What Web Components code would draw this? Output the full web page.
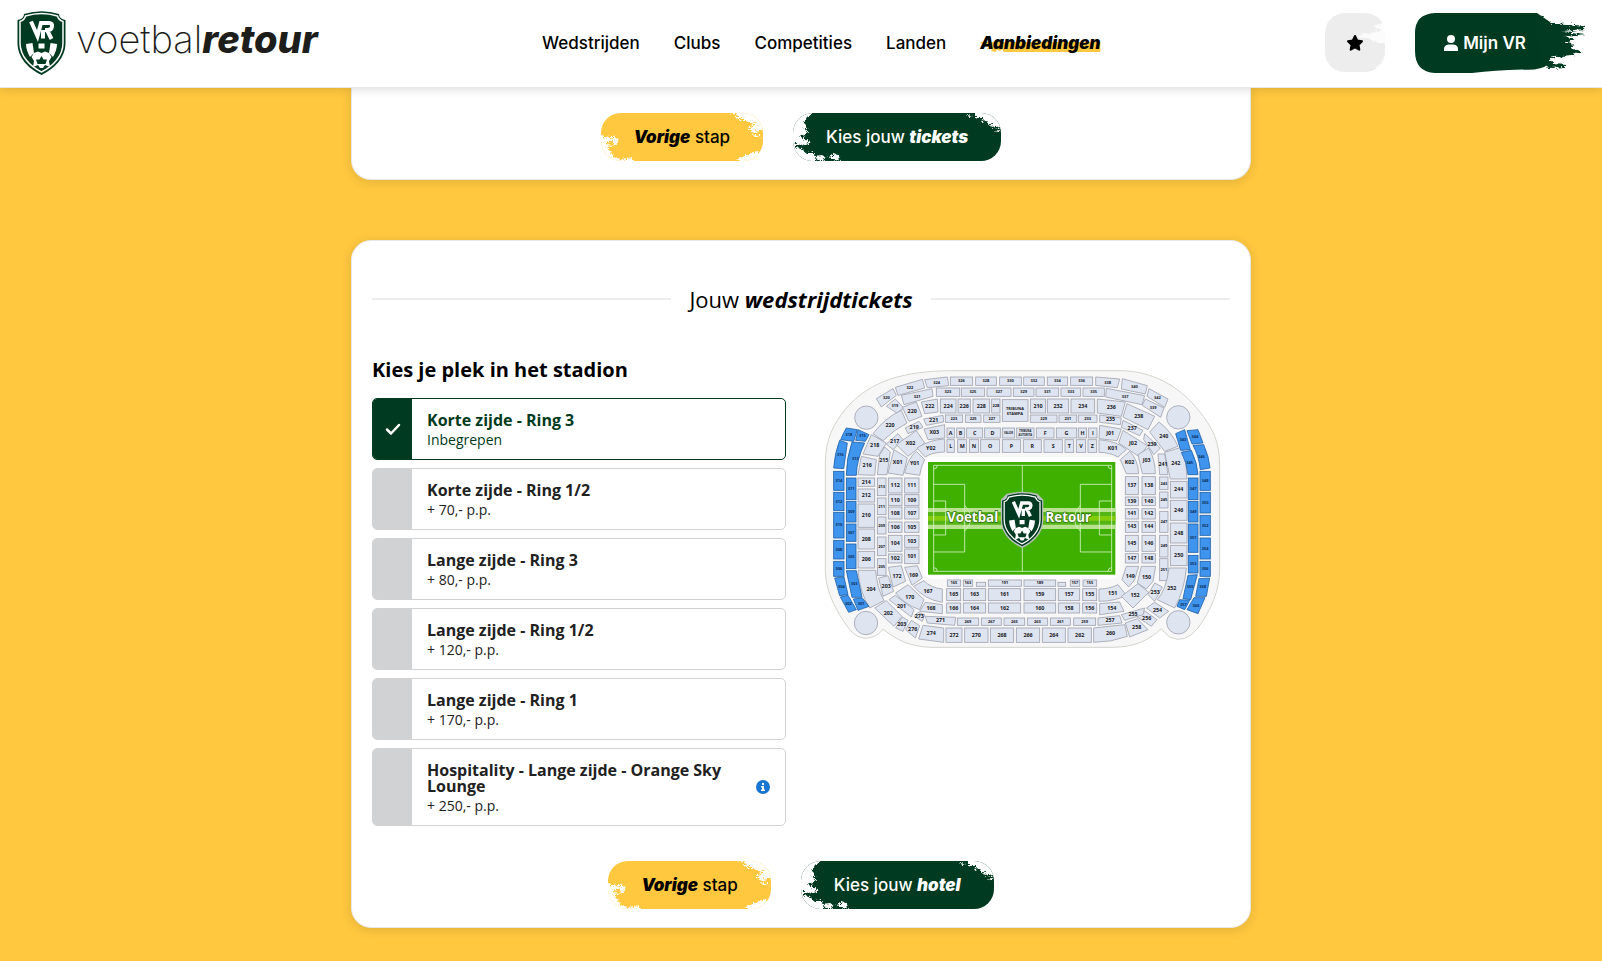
<!DOCTYPE html>
<html lang="nl">
<head>
<meta charset="utf-8">
<meta name="viewport" content="width=device-width, initial-scale=1">
<title>Voetbalretour</title>
<style>
	:root {
		--green: #003a20;
		--yellow: #ffc83f;
		--brand: Inter, "Open Sans", sans-serif;
	}
	body {
		margin: 0;
		min-height: 100vh;
		background: var(--yellow);
		color: #000;
		font: 14px/24px "Open Sans", "Noto Sans", sans-serif;
	}
	main {
		display: flex;
		flex-direction: column;
		gap: 60px;
		max-width: 900px;
		margin: 0 auto;
		padding-bottom: 33px;
	}
</style>
</head>
<body>
	<site-header></site-header>
	<main>
		<step-card open-top>
			<step-actions slot="actions">
				<brush-button tone="yellow"><b>Vorige</b> stap</brush-button>
				<brush-button tone="green">Kies jouw <b>tickets</b></brush-button>
			</step-actions>
		</step-card>
		<step-card>
			<section-title slot="title">Jouw <b>wedstrijdtickets</b></section-title>
			<seat-picker></seat-picker>
			<stadium-map></stadium-map>
			<step-actions slot="actions">
				<brush-button tone="yellow"><b>Vorige</b> stap</brush-button>
				<brush-button tone="green">Kies jouw <b>hotel</b></brush-button>
			</step-actions>
		</step-card>
	</main>

<script>
'use strict';

// club badge, drawn in a 49 x 64 box
const shield = `
	<path fill="#003a20" d="M7 3Q24.500-2.500 42 3Q42 8 48.500 9V32C48.500 47 37 58 24.500 64C12 58 .5 47 .5 32V9Q7 8 7 3Z"/>
	<path fill="none" stroke="#fff" stroke-width="1.500" d="M8.500 5Q24.500 0 40.500 5Q41.500 9 46 10.500V32C46 45 36 55.500 24.500 61C13 55.500 3 45 3 32V10.500Q7.500 9 8.500 5Z"/>
	<path fill="none" stroke="#fff" stroke-width="4" d="M14 10.500L20.500 25L24 12H32Q35.500 12 35 15.500Q34.500 19 31 19H28M30 19L34.500 28M26 19V27.500"/>
	<path fill="#fff" d="M9 33L15.500 32L17 42L13 46Q9 39 9 33ZM33.500 32L40 33Q40 39 36 46L32 42ZM21.500 32.500H27.500V37.500H21.500ZM17 42L21 40.500L24.500 42L28 40.500L32 42L34.500 46L32 50L33 56L28 54L26 57H23L21 54L16 56L17 50L14.500 46Z"/>
	<path fill="#003a20" d="M24.500 45L26.500 48.500H30L28.500 53H20.500L19 48.500H22.500Z"/>`;

class SiteHeader extends HTMLElement {
	constructor() {
		super();
		this.attachShadow({ mode: 'open' }).innerHTML = `
			<style>
				:host {
					display: block;
					position: relative;
					z-index: 1;
					background: #fff;
					box-shadow: 0 1px 10px rgba(0, 0, 0, .15);
					font-family: var(--brand);
				}
				header {
					box-sizing: border-box;
					display: flex;
					align-items: center;
					justify-content: space-between;
					height: 88px;
					padding: 0 17px 2px;
					border-bottom: 1px solid #e8e8e8;
				}
				a { color: inherit; text-decoration: none; }
				.logo {
					display: flex;
					gap: 10px;
					color: #1d1d1b;
					font-size: 38px;
					line-height: 56px;
					font-weight: 200;
				}
				.logo svg { width: 49px; height: 64px; }
				.logo b { font-weight: 800; font-style: italic; }
				nav {
					display: flex;
					gap: 34px;
					font-size: 17px;
					line-height: 24px;
					font-weight: 500;
				}
				nav .active {
					position: relative;
					font-weight: 900;
					font-style: italic;
				}
				.active svg {
					position: absolute;
					left: 0;
					bottom: 3px;
					width: 100%;
					height: 11px;
					z-index: -1;
				}
				.actions { display: flex; gap: 30px; }
				button {
					position: relative;
					display: flex;
					align-items: center;
					justify-content: center;
					gap: 5px;
					height: 60px;
					padding: 0;
					border: 0;
					background: none;
					font: 600 17px/24px var(--brand);
					color: #000;
				}
				button > * { position: relative; }
				button > .brush {
					position: absolute;
					inset: 0;
					width: 100%;
					height: 100%;
				}
				.fav { width: 60px; }
				.account { width: 170px; padding-right: 30px; color: #fff; }
			</style>
			<header>
				<a class="logo" href="#" aria-label="voetbalretour">
					<svg viewBox="0 0 49 64" aria-hidden="true">${shield}</svg>
					<span>voetbal<b>retour</b></span>
				</a>
				<nav>
					<a href="#">Wedstrijden</a>
					<a href="#">Clubs</a>
					<a href="#">Competities</a>
					<a href="#">Landen</a>
					<a href="#" class="active"><svg viewBox="0 0 122 12" preserveAspectRatio="none" aria-hidden="true"><path fill="#ffc83f" d="M0 1H122V12H24L23 9L20 11L17 9L16 12L11 11L13 8L7 9L9 6L0 6L3 4Z"/></svg>Aanbiedingen</a>
				</nav>
				<div class="actions">
					<button class="fav" type="button" aria-label="Favorieten">
						<svg class="brush" viewBox="0 0 60 60" aria-hidden="true">
							<defs><filter id="r"><feTurbulence baseFrequency=".15 .4" numOctaves="2" seed="3"/><feDisplacementMap in="SourceGraphic" scale="4"/></filter></defs>
							<rect width="60" height="59" rx="20" fill="#ededed"/>
							<path filter="url(#r)" fill="#fff" d="M62 9L46 13L56 16L38 20L31 23L42 24L47 27L62 30ZM62 44L55 47L57 50L49 53L52 56L40 60L62 62Z" opacity=".85"/>
						</svg>
						<svg width="18" height="18" viewBox="0 0 18 18" aria-hidden="true"><path stroke="#000" stroke-width="2" stroke-linejoin="round" d="M9 2L11.200 6.500L16 7.200L12.500 10.700L13.300 15.700L9 13.400L4.700 15.700L5.500 10.700L2 7.200L6.800 6.500Z"/></svg>
					</button>
					<button class="account" type="button">
						<svg class="brush" viewBox="0 0 170 60" aria-hidden="true">
							<defs><filter id="g" x="-5%" y="-5%" width="110%" height="110%"><feTurbulence baseFrequency=".12 .45" numOctaves="3" seed="8"/><feDisplacementMap in="SourceGraphic" scale="6" xChannelSelector="R" yChannelSelector="G"/></filter></defs>
							<path fill="#003a20" d="M20 0H122L135 9L140 22L146 30L134 42L131 48L134 51Q125 58 107 56.500Q80 57 57 60H20Q0 59 0 38V20Q0 1 20 0Z"/>
							<path filter="url(#g)" fill="#003a20" d="M118 2L128 3L126 8L138 9L170 12L169 15L146 17L170 20L148 22L159 25L149 28L158 31L154 34L167 38L154 41L140 43L133 44L137 49L150 50L148 53L133 54L125 46L120 20Z"/>
						</svg>
						<svg width="14" height="16" viewBox="0 0 14 16" aria-hidden="true"><circle cx="7" cy="4" r="4" fill="#fff"/><path fill="#fff" d="M0 16V14Q0 10 4.500 9.500H9.500Q14 10 14 14V16Z"/></svg>
						<span>Mijn VR</span>
					</button>
				</div>
			</header>
		`;
	}
}

class StepCard extends HTMLElement {
	constructor() {
		super();
		this.attachShadow({ mode: 'open' }).innerHTML = `
			<style>
				:host {
					display: block;
					padding: 43px 20px 18px;
					border: 1px solid #e8e8e8;
					border-radius: 20px;
					background: #fff;
					box-shadow: 0 2px 12px rgba(0, 0, 0, .12);
				}
				:host([open-top]) {
					padding-top: 25px;
					border-top: 0;
					border-radius: 0 0 20px 20px;
				}
				:host([open-top]) .columns { display: none; }
				.columns {
					display: grid;
					grid-template-columns: 1fr 1fr;
					gap: 30px;
					margin: 42px 0 35px;
				}
			</style>
			<slot name="title"></slot>
			<div class="columns"><slot></slot></div>
			<slot name="actions"></slot>
		`;
	}
}

class SectionTitle extends HTMLElement {
	constructor() {
		super();
		this.attachShadow({ mode: 'open' }).innerHTML = `
			<style>
				:host { display: block; }
				h2 {
					display: flex;
					align-items: center;
					gap: 18px;
					margin: 0;
					font-size: 22px;
					line-height: 30px;
					font-weight: 400;
				}
				h2::before, h2::after {
					content: "";
					flex: 1;
					height: 2px;
					background: #ededed;
				}
				::slotted(b) { font-style: italic; }
			</style>
			<h2><span><slot></slot></span></h2>
		`;
	}
}

class StepActions extends HTMLElement {
	constructor() {
		super();
		this.attachShadow({ mode: 'open' }).innerHTML = `
			<style>
				:host { display: flex; justify-content: center; gap: 30px; }
			</style>
			<slot></slot>
		`;
	}
}

class BrushButton extends HTMLElement {
	constructor() {
		super();
		this.attachShadow({ mode: 'open' });
		const green = this.getAttribute('tone') === 'green';

		// worn edges of the paint stroke, one piece for each end
		const left = green
			? 'M-4 -4H20L12 3L9 8L13 12L8 14L14 17L10 20L4 22L12 25L16 28L10 31L3 29L0 33L8 34L10 39L17 37L19 41L27 40L32 43L26 46L20 44L22 52H-4ZM34 42L38 41L38 39L44 40L45 46L39 47L41 44L37 44Z'
			: 'M-4 20L2 23L7 21L5 25L10 26L4 28L8 31L4 34L8 37L10 42L18 45L30 43L33 52H-4ZM9 22L14 23L15 28L13 31L9 32L12 28L8 27Z';
		const right = green
			? 'M32 -3L64 -3V17L57 15L55 12L48 13L50 9L43 10L46 6L38 8L41 4L34 4ZM52 15L58 18L54 18ZM24 0L30 1L26 2Z'
			: 'M22 -3H64V15L57 14L61 17L50 15L54 19L44 16L48 12L54 12L46 10L52 8L41 8L45 6L34 6L40 4L29 3L35 1ZM46 20L54 21L58 24L52 23ZM64 34L57 38L50 37L46 40L41 40L34 45L41 52H64Z';

		this.shadowRoot.innerHTML = `
			<style>
				:host { display: block; }
				button {
					position: relative;
					display: block;
					overflow: hidden;
					height: 48px;
					padding: 0 33px;
					border: 0;
					border-radius: 20px;
					background: ${green ? 'var(--green)' : 'var(--yellow)'};
					color: ${green ? '#fff' : '#000'};
					font: 500 17px/48px var(--brand);
				}
				span { position: relative; }
				svg {
					position: absolute;
					top: 0;
					width: 60px;
					height: 48px;
				}
				.left { left: 0; }
				.right { right: 0; }
				::slotted(b) { font-weight: 900; font-style: italic; }
			</style>
			<button type="button">
				<svg class="left" viewBox="0 0 60 48" aria-hidden="true">
					<defs><filter id="f"><feTurbulence baseFrequency=".25" numOctaves="2" seed="5"/><feDisplacementMap in="SourceGraphic" scale="6" xChannelSelector="R" yChannelSelector="G"/></filter></defs>
					<path filter="url(#f)" fill="#fff" d="${left}"/>
				</svg>
				<svg class="right" viewBox="0 0 60 48" aria-hidden="true">
					<path filter="url(#f)" fill="#fff" d="${right}"/>
				</svg>
				<span><slot></slot></span>
			</button>
		`;
	}
}

class SeatPicker extends HTMLElement {
	constructor() {
		super();
		this.attachShadow({ mode: 'open' });

		const options = [
			['Korte zijde - Ring 3', 'Inbegrepen'],
			['Korte zijde - Ring 1/2', '+ 70,- p.p.'],
			['Lange zijde - Ring 3', '+ 80,- p.p.'],
			['Lange zijde - Ring 1/2', '+ 120,- p.p.'],
			['Lange zijde - Ring 1', '+ 170,- p.p.'],
			['Hospitality - Lange zijde - Orange Sky Lounge', '+ 250,- p.p.', true]
		];

		this.shadowRoot.innerHTML = `
			<style>
				:host { display: block; }
				h3 { margin: 0 0 14px; font-size: 20px; line-height: 28px; }
				.list { display: flex; flex-direction: column; gap: 8px; }
				.option {
					display: flex;
					align-items: center;
					overflow: hidden;
					border: 1px solid #d1d2d4;
					border-radius: 5px;
					color: #212121;
				}
				label { display: flex; flex: 1; }
				.box { display: grid; place-items: center; width: 39px; background: #d1d2d4; }
				.box > * { grid-area: 1 / 1; }
				input { appearance: none; width: 39px; height: 100%; margin: 0; }
				.box svg { visibility: hidden; width: 16px; height: 16px; }
				.text { flex: 1; padding: 13px 15px 7px; }
				.text b { display: block; font-size: 16px; line-height: 16px; }
				.text span { display: block; font-size: 14px; line-height: 24px; }
				.option:has(:checked) { border-color: var(--green); color: var(--green); }
				:checked ~ svg { visibility: visible; }
				.option:has(:checked) .box { background: var(--green); }
				button {
					width: 14px;
					height: 14px;
					margin: 0 15px;
					padding: 0;
					border: 0;
					background: none;
				}
				button svg { display: block; }
			</style>
			<h3>Kies je plek in het stadion</h3>
			<div class="list">
				${options.map(([name, price, info], i) => `
					<div class="option">
						<label>
							<span class="box">
								<input type="radio" name="seat" value="${i}" ${i === 0 ? 'checked' : ''}>
								<svg viewBox="0 0 16 16" aria-hidden="true"><path fill="none" stroke="#fff" stroke-width="2.500" stroke-linecap="round" stroke-linejoin="round" d="M2 8.500L6 12.500L14 4"/></svg>
							</span>
							<span class="text"><b>${name}</b><span>${price}</span></span>
						</label>
						${info ? `<button type="button" aria-label="Meer informatie"><svg width="14" height="14" viewBox="0 0 14 14"><circle cx="7" cy="7" r="7" fill="#1976d2"/><path fill="#fff" d="M6 3H8V5H6ZM5 6H8V9.500H9V11H5V9.500H6V7.500H5Z"/></svg></button>` : ''}
					</div>
				`).join('')}
			</div>
		`;
	}
}

// straight blocks by row: y, height, then [x, width, label]
const rows = [
	[52, 25, [[427, 67, '326'], [503, 62, '328'], [575, 65, '330'], [647, 62, '332'], [718, 61, '334'], [788, 66, '336']]],
	[85, 25, [[385, 70, '323'], [460, 70, '325'], [537, 72, '327'], [616, 62, '329'], [684, 68, '331'], [759, 59, '333'], [825, 64, '335']]],
	[118, 42, [[397, 47, '224'], [450, 37, '226'], [495, 50, '228'], [551, 25, '228'], [667, 46, '210'], [718, 64, '232'], [789, 71, '234']]],
	[166, 22, [[412, 52, '223'], [472, 47, '225'], [527, 49, '227'], [667, 80, '229'], [753, 53, '231'], [811, 56, '233']]],
	[205, 30, [[417, 22, 'A'], [446, 24, 'B'], [476, 48, 'C'], [530, 47, 'D'], [583, 37, 'VALOR'], [626, 52, ''], [685, 53, 'F'], [745, 61, 'G'], [811, 25, 'H'], [842, 25, 'I']]],
	[240, 38, [[417, 22, 'L'], [449, 27, 'M'], [484, 28, 'N'], [518, 57, 'O'], [583, 55, 'P'], [646, 54, 'R'], [708, 55, 'S'], [771, 26, 'T'], [805, 28, 'V'], [840, 26, 'Z']]],
	[661, 19, [[418, 40, '165'], [466, 28, '163'], [541, 99, '191'], [648, 95, '189'], [787, 28, '157'], [825, 41, '155']]],
	[668, 12, [[505, 28, ''], [750, 23, '']]],
	[687, 36, [[416, 42, '165'], [466, 67, '163'], [541, 97, '161'], [648, 95, '159'], [751, 64, '157'], [824, 42, '155']]],
	[730, 30, [[416, 42, '166'], [466, 67, '164'], [541, 97, '162'], [648, 95, '160'], [751, 64, '158'], [824, 42, '156']]],
	[775, 22, [[448, 64, '269'], [520, 60, '267'], [588, 62, '265'], [658, 61, '263'], [727, 60, '261'], [797, 66, '259']]],
	[805, 43, [[414, 48, '272'], [470, 70, '270'], [547, 70, '268'], [625, 70, '266'], [703, 69, '264'], [780, 70, '262']]]
];

// straight blocks by column: x, width, then [y, height, label]
const columns = [
	[150, 50, [[355, 25, '214'], [388, 39, '212'], [433, 70, '210'], [508, 60, '208'], [575, 50, '206']]],
	[208, 26, [[355, 53, '213'], [415, 50, '211'], [472, 51, '209'], [532, 56, '207'], [597, 50, '205']]],
	[241, 41, [[355, 45, '112'], [405, 33, '110'], [442, 36, '108'], [487, 31, '106'], [527, 48, '104'], [583, 27, '102']]],
	[290, 43, [[355, 45, '111'], [405, 33, '109'], [442, 36, '107'], [487, 31, '105'], [527, 36, '103'], [568, 44, '101']]],
	[952, 39, [[351, 54, '137'], [412, 26, '139'], [447, 31, '141'], [485, 33, '143'], [527, 48, '145'], [582, 28, '147']]],
	[1002, 40, [[351, 54, '138'], [412, 26, '140'], [447, 31, '142'], [485, 33, '144'], [527, 48, '146'], [582, 28, '148']]],
	[1055, 25, [[352, 38, '243'], [397, 48, '245'], [455, 63, '247'], [527, 65, '249'], [597, 66, '251']]],
	[1087, 50, [[365, 50, '244'], [422, 60, '246'], [490, 60, '248'], [557, 61, '250']]],
	[77, 31, [[335, 57, '314'], [398, 55, '312'], [458, 77, '310'], [542, 56, '308'], [605, 45, '306']], 'on'],
	[115, 29, [[355, 65, '311'], [425, 62, '309'], [493, 52, '307'], [553, 74, '305']], 'on'],
	[1141, 29, [[355, 65, '347'], [425, 62, '349'], [493, 85, '351'], [587, 53, '353']], 'on'],
	[1176, 31, [[335, 57, '348'], [398, 62, '350'], [467, 60, '352'], [535, 63, '354'], [605, 45, '356']], 'on']
];

// blocks in the four bends
const bends = [
	['350,60 418,52 422,78 358,84', '324'], ['262,83 343,59 350,85 270,107', '322'], ['205,117 255,87 265,107 220,142', '320'],
	['280,107 372,87 375,110 288,135', '321'], ['235,140 262,118 287,145 267,160', '319'],
	['195,222 Q230,175 280,152 297,190 Q258,210 225,243', '220'], ['283,143 325,127 342,170 303,185', '220'], ['340,127 388,118 390,157 350,162', '222'],
	['292,205 333,185 345,203 300,222', '219'], ['347,178 405,167 407,187 355,197', '221'], ['235,253 270,222 285,240 255,270', '217'],
	['190,225 235,250 210,290 165,283', '218'], ['160,290 205,300 200,347 150,345', '216'], ['215,285 230,262 247,277 237,345 208,345', '215'],
	['348,208 410,195 410,235 360,240', 'X03'], ['265,255 325,213 350,250 300,290', 'X02'], ['258,270 298,295 285,347 240,340', 'X01'],
	['327,265 Q365,240 410,238 410,277 Q370,278 352,292', 'Y02'], ['290,340 Q300,295 325,275 350,300 Q337,325 335,347', 'Y01'],
	['863,52 935,58 928,84 863,77', '338'], ['943,57 1018,78 1012,103 940,88', '340'], ['1023,87 1080,118 1070,143 1017,110', '342'],
	['895,86 1010,108 1002,135 893,112', '337'], ['1012,118 1068,145 1058,173 1003,137', '339'],
	['868,118 952,127 940,170 868,160', '236'], ['957,132 1040,170 1020,210 945,172', '238'], ['1053,187 Q1090,215 1110,260 1070,275 1025,217', '240'], ['1070,278 1123,262 Q1137,310 1137,358 1087,358', '242'],
	['875,166 940,175 937,195 875,188', '235'], ['945,182 1005,212 995,228 940,203', '237'], ['1010,222 1057,265 1038,285 1007,240', '239'], ['1050,283 1070,283 1080,345 1055,345', '241'],
	['875,197 940,208 927,243 873,237', 'J01'], ['945,212 1018,258 995,292 932,250', 'J02'], ['990,285 1022,265 Q1042,300 1042,342 1003,342', 'J03'],
	['873,240 Q930,245 955,270 930,292 Q905,278 873,278', 'K01'], ['937,300 965,275 Q990,300 992,342 955,342', 'K02'],
	['150,632 203,632 Q207,685 228,723 185,745 Q155,700 150,632', '204'], ['212,655 240,648 257,695 225,710', '203'], ['241,623 280,618 293,665 255,682', '172'], ['290,623 328,618 343,655 312,677', '169'],
	['263,700 300,675 348,720 335,750 Q290,735 263,700', '170'], ['317,680 347,663 Q370,685 403,688 403,728 Q350,720 317,680', '167'], ['352,728 403,735 403,762 335,755', '168'],
	['243,720 262,707 318,750 310,772', '201'], ['200,745 235,723 282,770 258,800', '202'], ['263,805 283,772 300,782 285,815', '203'], ['293,810 310,782 335,798 322,835', '276'], ['318,770 330,758 350,765 343,785', '273'],
	['352,770 443,773 440,797 358,790', '271'], ['345,797 407,805 407,848 332,838', '274'],
	['873,688 Q905,688 930,675 955,707 Q920,725 873,725', '151'], ['942,660 955,620 992,620 980,660 962,682', '149'], ['1000,620 1043,620 1035,665 1015,688 988,670', '150'],
	['940,710 990,672 1022,698 975,745', '152'], ['875,732 935,727 948,755 875,765', '154'], ['1083,625 1135,625 Q1130,690 1100,745 1048,720 Q1075,690 1083,625', '252'],
	['1020,705 1040,670 1063,682 1040,725', '253'], ['1015,745 1040,728 1082,755 1055,775', '254'], ['985,770 1012,755 1047,780 1030,800', '256'], ['952,790 988,777 1020,810 965,832', '258'],
	['940,765 1010,745 1005,765 950,782', '255'], ['870,775 935,768 942,790 870,797', '257'], ['857,805 950,795 958,830 Q910,848 857,848', '260'],
	['98,240 Q105,222 115,205 148,210 137,245', '318', 'on'], ['77,325 Q80,280 95,242 118,250 107,327', '316', 'on'], ['150,210 183,225 172,245 143,242', '315', 'on'], ['132,247 170,250 Q146,300 145,347 115,347 Q115,295 132,247', '313', 'on'],
	['80,655 108,652 120,705 95,708', '304', 'on'], ['97,712 120,707 145,750 122,758', '302', 'on'], ['115,633 145,633 162,713 132,713', '303', 'on'], ['136,718 163,715 183,740 150,752', '301', 'on'],
	['1103,222 1130,210 1147,270 1118,272', '343', 'on'], ['1120,278 1150,272 Q1168,310 1170,345 1140,345 Q1137,310 1120,278', '345', 'on'], ['1137,213 1170,210 1185,250 1152,253', '344', 'on'], ['1155,257 1187,255 Q1203,290 1206,325 1177,330 Q1173,290 1155,257', '346', 'on'],
	['1140,647 1168,645 1148,720 1125,717', '355', 'on'], ['1115,720 1145,722 1130,750 1107,740', '357', 'on'], ['1173,657 1205,655 1195,710 1163,710', '358', 'on'], ['1158,714 1191,714 1170,762 1137,750', '360', 'on']
];

class StadiumMap extends HTMLElement {
	constructor() {
		super();
		this.attachShadow({ mode: 'open' }).innerHTML = `
			<style>
				:host { display: block; padding: 12px 7px 0; }
				svg { display: block; width: 100%; }
				.block { fill: #dfe4f1; stroke: #a0a3b0; stroke-width: 2.500; }
				.on { fill: #3f94ee; stroke: #1f62a8; }
				text {
					font: bold 16px "Open Sans", sans-serif;
					text-anchor: middle;
					fill: #16181d;
				}
				.small { font-size: 12px; }
				.tiny { font-size: 8px; }
				.on + text { fill: #0c2c58; }
				.lines { fill: none; stroke: #d5f3c4; stroke-width: 2.500; }
				.club { font-size: 40px; fill: #fff; stroke: #2c6c13; stroke-width: 4; paint-order: stroke; }
			</style>
			<svg viewBox="45 25 1200 850" role="img" aria-label="Plattegrond van het stadion">
				<path fill="#f7f7f7" stroke="#d3d3cd" stroke-width="3" d="M430 33H940C1030 35 1110 75 1170 150C1215 205 1235 245 1235 320V630C1235 690 1210 750 1170 805Q1130 855 1085 832Q1070 820 1060 807C1020 845 975 862 915 863H365C310 860 270 845 225 808Q210 832 175 836Q145 835 125 810C80 750 52 690 52 630V310C52 240 75 195 115 145C190 60 290 35 430 33Z"/>
				<rect x="345" y="292" width="592" height="366" rx="25" fill="#fff"/>
				<g class="rings"></g>
				<rect class="block" x="583" y="120" width="77" height="65"/>
				<text class="small" x="621" y="150">TRIBUNA</text>
				<text class="small" x="621" y="165">STAMPA</text>
				<text class="tiny" x="652" y="218">TRIBUNA</text>
				<text class="tiny" x="652" y="228">AUTORITA</text>
				<g class="block">
					<circle cx="175" cy="174" r="35"/><circle cx="1111" cy="173" r="35"/>
					<circle cx="174" cy="790" r="35"/><circle cx="1111" cy="788" r="35"/>
				</g>
				<rect x="360" y="307" width="562" height="338" fill="#3fb000"/>
				<path fill="#b8e28f" d="M360 445H922V508H360Z"/>
				<path fill="#55b517" d="M360 457H922V495H360Z"/>
				<path fill="#83cc0a" d="M360 469H922V483H360Z"/>
				<path class="lines" d="M377 317H911V635H377ZM643 317V635M377 374H470V577H377M377 424H413V526H377M911 374H817V577H911M911 424H874V526H911M470 437Q507 476 470 515M817 437Q780 476 817 515M377 328Q388 328 388 317M911 328Q900 328 900 317M377 624Q388 624 388 635M911 624Q900 624 900 635"/>
				<text class="club" x="494" y="488">Voetbal</text>
				<text class="club" x="781" y="488">Retour</text>
				<g transform="translate(581 400) scale(2.500 2.500)">
					<path fill="#b9bfba" d="M6 1Q24.500-4 43 1L50 8V33C50 48 38 60 24.500 66C11 60-1 48-1 33V8Z"/>
					${shield}
				</g>
			</svg>
		`;
	}

	connectedCallback() {
		const blocks = [];
		for (const [y, h, items, cls] of rows) {
			for (const [x, w, label] of items) blocks.push(this.rect(x, y, w, h, label, cls));
		}
		for (const [x, w, items, cls] of columns) {
			for (const [y, h, label] of items) blocks.push(this.rect(x, y, w, h, label, cls));
		}
		for (const [points, label, cls] of bends) {
			const xy = points.replace(/Q\S+ /g, '').split(' ').map(p => p.split(',').map(Number));
			const xs = xy.map(p => p[0]);
			const ys = xy.map(p => p[1]);
			// a curve takes two points, the ones after it are straight again
			const d = points.replace(/(Q\S+ \S+) (?!Q)/g, '$1 L');
			blocks.push(`<path class="block ${cls || ''}" d="M${d}Z"/>`);
			blocks.push(this.label((Math.min(...xs) + Math.max(...xs)) / 2, (Math.min(...ys) + Math.max(...ys)) / 2, label));
		}
		this.shadowRoot.querySelector('.rings').innerHTML = blocks.join('');
	}

	rect(x, y, w, h, label, cls) {
		return `<rect class="block ${cls || ''}" x="${x}" y="${y}" width="${w}" height="${h}"/>` + this.label(x + w / 2, y + h / 2, label, h < 24 || w < 27);
	}

	label(x, y, label, narrow) {
		if (!label) return '';
		const small = label.length > 1 && (narrow || label[0] === '3');
		const size = label.length > 3 ? 'tiny' : small ? 'small' : '';
		return `<text class="${size}" x="${x}" y="${y + (size ? 4 : 5)}">${label}</text>`;
	}
}

customElements.define('site-header', SiteHeader);
customElements.define('step-card', StepCard);
customElements.define('section-title', SectionTitle);
customElements.define('step-actions', StepActions);
customElements.define('brush-button', BrushButton);
customElements.define('seat-picker', SeatPicker);
customElements.define('stadium-map', StadiumMap);
</script>
</body>
</html>
